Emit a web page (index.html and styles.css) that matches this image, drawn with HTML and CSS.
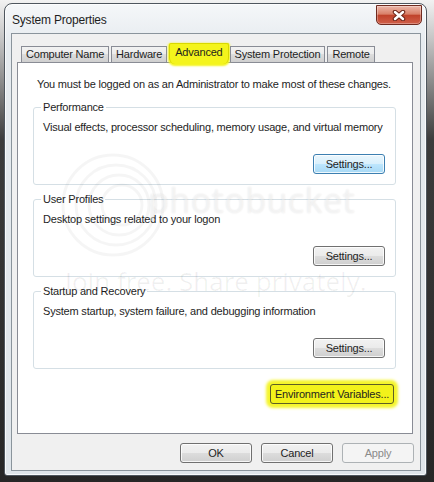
FILE: index.html
```html
<!DOCTYPE html>
<html lang="en">
<head>
    <meta charset="UTF-8">
    <title>System Properties</title>
    <link rel="stylesheet" href="styles.css">
</head>
<body>
    <div class="window">
        <div class="titlebar">
            <span class="title">System Properties</span>
            <button class="close">
                <svg width="14" height="11" viewBox="0 0 14 11">
                    <path d="M3 2 L11 9 M11 2 L3 9" stroke="#6a2418" stroke-width="4.5" stroke-linecap="round"/>
                    <path d="M3 2 L11 9 M11 2 L3 9" stroke="#fff" stroke-width="2.5" stroke-linecap="round"/>
                </svg>
            </button>
        </div>

        <div class="client">
            <div class="tabs">
                <div class="tab">Computer Name</div>
                <div class="tab">Hardware</div>
                <div class="tab active">Advanced</div>
                <div class="tab">System Protection</div>
                <div class="tab">Remote</div>
            </div>

            <div class="panel">
                <p class="note">You must be logged on as an Administrator to make most of these changes.</p>

                <fieldset class="group">
                    <legend>Performance</legend>
                    <p class="desc">Visual effects, processor scheduling, memory usage, and virtual memory</p>
                    <div class="row"><button class="btn default">Settings...</button></div>
                </fieldset>

                <fieldset class="group">
                    <legend>User Profiles</legend>
                    <p class="desc">Desktop settings related to your logon</p>
                    <div class="row"><button class="btn">Settings...</button></div>
                </fieldset>

                <fieldset class="group">
                    <legend>Startup and Recovery</legend>
                    <p class="desc">System startup, system failure, and debugging information</p>
                    <div class="row"><button class="btn">Settings...</button></div>
                </fieldset>

                <div class="env-row"><button class="btn env">Environment Variables...</button></div>
            </div>

            <div class="footer">
                <button class="btn">OK</button>
                <button class="btn">Cancel</button>
                <button class="btn" disabled>Apply</button>
            </div>
        </div>
    </div>

    <!-- photobucket watermark over the screenshot -->
    <div class="watermark">
        <svg class="wm-swirl" width="110" height="110" viewBox="0 0 110 110">
            <circle cx="55" cy="55" r="50" fill="none" stroke="rgba(0,0,0,0.04)" stroke-width="3"/>
            <circle cx="58" cy="55" r="40" fill="none" stroke="rgba(0,0,0,0.04)" stroke-width="3"/>
            <circle cx="61" cy="55" r="30" fill="none" stroke="rgba(0,0,0,0.04)" stroke-width="3"/>
            <circle cx="64" cy="55" r="20" fill="none" stroke="rgba(0,0,0,0.04)" stroke-width="3"/>
        </svg>
        <span class="wm-name">photobucket</span>
        <span class="wm-slogan">Join free. Share privately.</span>
    </div>
</body>
</html>
```

FILE: styles.css
```css
body {
    margin: 0;
    height: 482px;
    overflow: hidden;
    position: relative;
    font-family: "Liberation Sans", Arial, sans-serif;
    font-size: 11px;
    letter-spacing: -0.2px;
    color: #1e1e1e;
    background: linear-gradient(#f2f2f2 0, #c4c4c4 40px, #3c3c3c 140px, #262626 100%);
}
.window {
    box-sizing: border-box;
    width: 423px;
    height: 473px;
    margin: 3px 0 0 4px;
    padding: 0 5px 4px 6px;
    display: flex;
    flex-direction: column;
    border: 1px solid #4e565e;
    border-radius: 8px 8px 3px 3px;
    background: linear-gradient(#f5f7f9, #e6ebef 40px, #dfe5ea);
    box-shadow: inset 0 0 0 1px rgba(255,255,255,0.75);
}
.titlebar {
    height: 29px;
    display: flex;
    justify-content: space-between;
    align-items: flex-start;
}
.title {
    padding: 8px 0 0 1px;
    line-height: 16px;
    font-size: 12px;
}
.close {
    width: 46px;
    height: 20px;
    margin: 1px -1px 0 0;
    padding: 0;
    display: flex;
    align-items: center;
    justify-content: center;
    border: 1px solid #6f2a1f;
    border-radius: 0 0 5px 5px;
    background: linear-gradient(#ecb8ab 0%, #d98068 45%, #c0432b 52%, #d0604a 100%);
    box-shadow: inset 0 0 0 1px rgba(255,255,255,0.3);
}
.client {
    flex: 1;
    display: flex;
    flex-direction: column;
    padding: 9px 7px 7px 5px;
    border: 1px solid #8a949c;
    background: #f0f0f0;
}
.tabs {
    height: 19px;
    display: flex;
    align-items: flex-end;
    padding-left: 4px;
    position: relative;
    z-index: 1;
    white-space: nowrap;
}
.tab {
    box-sizing: border-box;
    height: 16px;
    margin-right: 2px;
    padding: 0 4px;
    line-height: 15px;
    border: 1px solid #898c95;
    border-bottom: none;
    background: linear-gradient(#f2f2f2, #ebebeb 50%, #dddddd 50%, #cfcfcf);
}
.tab.active {
    height: 21px;
    margin: 0 1px -2px 0;
    padding: 1px 5px 0;
    border-color: #d8d800;
    border-radius: 2px 2px 6px 6px;
    background: #f4f41c;
    box-shadow: 0 1px 2px 1px #f4f41c;
}
.panel {
    flex: 1;
    padding: 0 16px 0 15px;
    border: 1px solid #898c95;
    background: #fff;
}
.note {
    margin: 13px 0 7px 4px;
    line-height: 16px;
    white-space: nowrap;
}
.group {
    margin: 0 0 6px;
    padding: 0 10px 10px 9px;
    min-width: 0;
    border: 1px solid #d5dfe5;
    border-radius: 3px;
}
.group legend {
    padding: 0 2px;
    margin-left: -2px;
    line-height: 16px;
}
.desc {
    margin: 4px 0 0;
    line-height: 16px;
    white-space: nowrap;
}
.row {
    display: flex;
    justify-content: flex-end;
    margin-top: 19px;
}
.btn {
    box-sizing: border-box;
    width: 72px;
    height: 20px;
    padding: 0;
    font: inherit;
    letter-spacing: inherit;
    color: inherit;
    white-space: nowrap;
    border: 1px solid #707070;
    border-radius: 3px;
    background: linear-gradient(#f2f2f2, #ebebeb 49%, #dddddd 50%, #cfcfcf);
    box-shadow: inset 0 0 0 1px rgba(255,255,255,0.8);
}
.btn.default {
    border-color: #3c7fb1;
    background: linear-gradient(#eaf6fd, #d9f0fc 49%, #bee6fd 50%, #a7d9f5);
}
.btn:disabled {
    color: #8a8a8a;
    border-color: #adb2b5;
    background: #f4f4f4;
    box-shadow: none;
}
.env-row {
    display: flex;
    justify-content: flex-end;
    padding: 9px 2px 0 0;
}
.btn.env {
    width: 124px;
    border-color: #5e5e24;
    background: #f2f21a;
    box-shadow: 0 0 3px 4px #f5f52c;
}
.footer {
    display: flex;
    justify-content: flex-end;
    gap: 9px;
    margin: 9px -1px 0 0;
}
.watermark {
    position: absolute;
    inset: 0;
    pointer-events: none;
    font-family: "Open Sans", sans-serif;
    letter-spacing: 0;
}
.wm-swirl {
    position: absolute;
    left: 58px;
    top: 150px;
}
.wm-name {
    position: absolute;
    left: 148px;
    top: 190px;
    font-size: 34px;
    line-height: 20px;
    letter-spacing: 0.5px;
    color: rgba(255,255,255,0.45);
    text-shadow: 0 0 2px rgba(0,0,0,0.1);
}
.wm-slogan {
    position: absolute;
    left: 65px;
    top: 276px;
    font-size: 26px;
    line-height: 10px;
    color: rgba(0,0,0,0.06);
}
```
